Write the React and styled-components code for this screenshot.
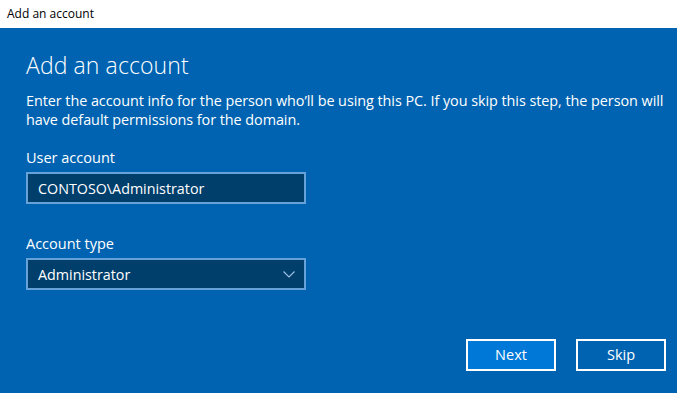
import React from 'react';
import styled, { createGlobalStyle } from 'styled-components';

const GlobalStyle = createGlobalStyle`
  html, body {
    margin: 0;
    padding: 0;
    height: 100%;
    overflow: hidden;
  }
  body {
    font-family: "Open Sans", "Noto Sans", sans-serif;
  }
`;

const Window = styled.div`
  width: 677px;
  height: 393px;
  display: flex;
  flex-direction: column;
  background: #0063b1;
`;

const TitleBar = styled.div`
  height: 28px;
  flex: none;
  background: #ffffff;
  color: #000000;
  font-size: 12px;
  line-height: 28px;
  padding-left: 7px;
  padding-bottom: 1px;
  box-sizing: border-box;
`;

const Body = styled.div`
  flex: 1;
  display: flex;
  flex-direction: column;
  padding: 21px 11px 0 26px;
  color: #ffffff;
`;

const Heading = styled.h1`
  margin: 0;
  font-size: 23px;
  font-weight: 300;
  line-height: 32px;
  letter-spacing: 0.1px;
`;

const Description = styled.p`
  margin: 10px 0 0;
  font-size: 14.4px;
  line-height: 19px;
  letter-spacing: -0.05px;
`;

const Field = styled.div`
  display: flex;
  flex-direction: column;
  margin-top: ${p => p.$top}px;
`;

const Label = styled.div`
  font-size: 14.5px;
  line-height: 20px;
  margin-bottom: 4px;
`;

const Box = styled.div`
  width: 280px;
  height: 32px;
  box-sizing: border-box;
  border: 2px solid #66a1d8;
  background: #003e6b;
  display: flex;
  align-items: center;
  justify-content: space-between;
  padding: 0 9px 0 10px;
  font-size: 14.3px;
  color: #ffffff;
`;

const Chevron = () => (
  <svg width="12" height="7" viewBox="0 0 12 7">
    <path d="M0.5 0.5 L6 6 L11.5 0.5" fill="none" stroke="#9fc3e6" strokeWidth="1.1" />
  </svg>
);

const Actions = styled.div`
  margin-top: auto;
  margin-bottom: 22px;
  display: flex;
  justify-content: flex-end;
  gap: 20px;
`;

const Button = styled.button`
  width: 90px;
  height: 32px;
  box-sizing: border-box;
  border: 2px solid #ffffff;
  background: ${p => (p.$primary ? '#0078d7' : '#0063b1')};
  color: #ffffff;
  font-family: inherit;
  font-size: 14.5px;
  padding: 0 0 2px;
  cursor: pointer;
`;

export default function App() {
  return (
    <>
      <GlobalStyle />
      <Window>
        <TitleBar>Add an account</TitleBar>
        <Body>
          <Heading>Add an account</Heading>
          <Description>
            Enter the account info for the person who’ll be using this PC. If you skip this step, the person will
            have default permissions for the domain.
          </Description>
          <Field $top={19}>
            <Label>User account</Label>
            <Box>CONTOSO\Administrator</Box>
          </Field>
          <Field $top={30}>
            <Label>Account type</Label>
            <Box>
              Administrator
              <Chevron />
            </Box>
          </Field>
          <Actions>
            <Button $primary>Next</Button>
            <Button>Skip</Button>
          </Actions>
        </Body>
      </Window>
    </>
  );
}
